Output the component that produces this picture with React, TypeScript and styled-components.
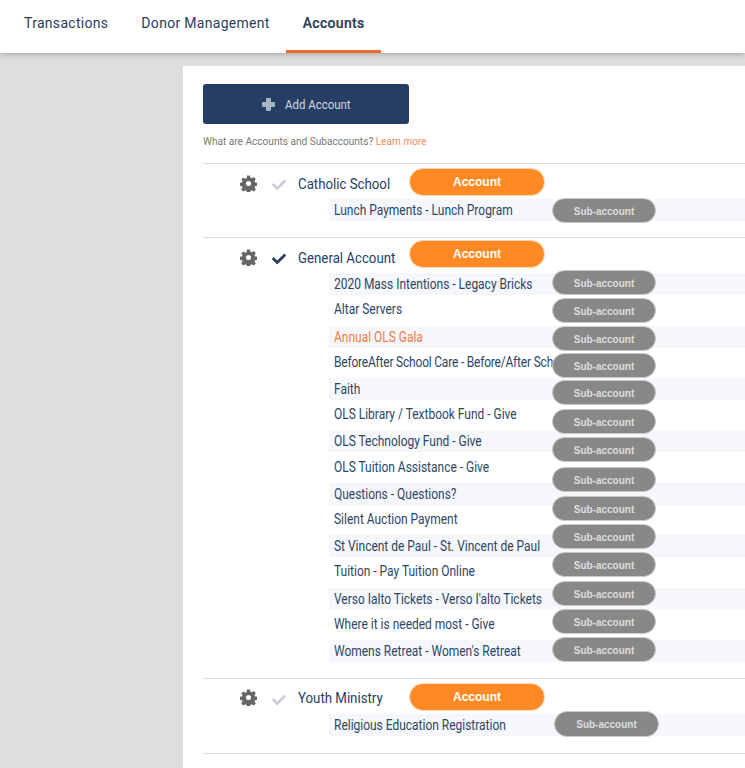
import styled, { createGlobalStyle } from 'styled-components'
import { FaCheck } from 'react-icons/fa'

const Global = createGlobalStyle`
  html, body { margin: 0; padding: 0; background: #dedede; }
  body { font-family: Roboto, "Liberation Sans", sans-serif; }
`

const Page = styled.div`
  width: 745px;
  height: 768px;
  overflow: hidden;
  display: flex;
  flex-direction: column;
`
const TopBar = styled.nav`
  height: 53px;
  flex: none;
  background: #ffffff;
  display: flex;
  padding-left: 7.5px;
  box-shadow: 0 1px 6px rgba(0, 0, 0, 0.28);
`
const Tab = styled.a<{ $active?: boolean }>`
  height: 46px;
  padding: 0 16.5px 4px;
  display: flex;
  align-items: center;
  font-size: 14px;
  letter-spacing: 0.3px;
  color: #27405f;
  font-weight: ${(p) => (p.$active ? 500 : 400)};
  -webkit-text-stroke: ${(p) => (p.$active ? '0.2px' : '0')};
  border-bottom: 3px solid ${(p) => (p.$active ? '#f26a2e' : 'transparent')};
`
const Body = styled.div`
  flex: 1;
  display: flex;
  padding: 13px 0 0 183px;
`
const Panel = styled.main`
  flex: 1;
  background: #ffffff;
  padding: 18px 0 0 20px;
`
// the reference font is a condensed one, none is installed so squeeze Roboto
const Narrow = styled.span`
  display: inline-block;
  white-space: nowrap;
  transform: scaleX(0.855);
  transform-origin: left center;
`
const RowText = styled(Narrow)<{ $tight?: boolean }>`
  vertical-align: top;
  letter-spacing: ${(p) => (p.$tight ? '-0.22px' : 'normal')};
`
const AddButton = styled.button`
  width: 206px;
  height: 40px;
  padding: 0 0 0 59px;
  background: #263e63;
  border: none;
  border-radius: 3px;
  color: #d3d9e2;
  font-family: inherit;
  font-size: 13.4px;
  display: flex;
  align-items: center;
  gap: 10px;
`
const PlusIcon = styled.svg`
  width: 13px;
  height: 13px;
  flex: none;
  fill: #a8b3c3;
`
const Help = styled.p`
  margin: 9px 0 14.3px;
  height: 16px;
  line-height: 16px;
  font-size: 11.8px;
  color: #777777;
`
const Learn = styled.a`
  color: #f58a5a;
`
const Group = styled.section`
  border-top: 1px solid #dddddd;
  padding: 4px 0 16px;
`
const EndRule = styled.hr`
  margin: 1px 0 0;
  border: none;
  border-top: 1px solid #dddddd;
`
const Head = styled.div`
  display: flex;
  align-items: center;
  height: 28px;
  margin-bottom: 3px;
  padding-left: 37px;
`
const GearIcon = styled.svg`
  width: 17px;
  height: 17px;
  color: #666666;
  flex: none;
  margin-top: 2px;
`
const Check = styled(FaCheck)<{ $on?: boolean }>`
  width: 14px;
  height: 14px;
  flex: none;
  margin: 6px 12.5px 0 14.5px;
  color: ${(p) => (p.$on ? '#27405f' : '#c8cfd9')};
`
const AccountName = styled.span`
  width: 111px;
  flex: none;
  font-size: 15.5px;
  color: #27405f;
  margin-top: 3px;
`
const AccountPill = styled.span<{ $raised?: boolean }>`
  width: 136px;
  height: 28px;
  box-sizing: border-box;
  border-radius: 14px;
  background: #ff8a25;
  border: 1px solid #ffd9b5;
  color: #ffffff;
  font: bold 12px "Liberation Sans", sans-serif;
  display: flex;
  align-items: center;
  justify-content: center;
  margin-top: ${(p) => (p.$raised ? -4 : 0)}px;
`
const Rows = styled.div`
  position: relative;
  margin-left: 126px;
  display: flex;
  flex-direction: column;
  gap: 4.2px;
`
const Row = styled.div<{ $striped: boolean; $orange: boolean }>`
  height: 22px;
  line-height: ${(p) => (p.$striped ? 22 : 21.5)}px;
  padding-left: 5px;
  font-size: 14px;
  color: ${(p) => (p.$orange ? '#f27b45' : '#2c4666')};
  background: ${(p) => (p.$striped ? '#f5f7fb' : 'transparent')};
`
// the pills do not follow the rows one to one, they lie over them in their own stack
const PillStack = styled.div<{ $top: number; $left: number }>`
  position: absolute;
  top: ${(p) => p.$top}px;
  left: ${(p) => p.$left}px;
`
const SubPill = styled.div<{ $gap: number; $large?: boolean }>`
  width: ${(p) => (p.$large ? 105 : 104)}px;
  height: ${(p) => (p.$large ? 26 : 25)}px;
  margin-top: ${(p) => p.$gap}px;
  padding-top: 1px;
  box-sizing: border-box;
  border-radius: 13px;
  background: #888888;
  border: 1px solid #c9c9c9;
  color: #dddddd;
  font: bold 10px "Liberation Sans", sans-serif;
  display: flex;
  align-items: center;
  justify-content: center;
`

const Gear = () => (
  <GearIcon viewBox="0 0 17 17" fill="currentColor">
    <path
      fillRule="evenodd"
      d="M7 0.5h3l.4 2.2 1.4.6 1.9-1.3 2.1 2.1-1.3 1.9.6 1.4 2.2.4v3l-2.2.4-.6 1.4 1.3 1.9-2.1 2.1-1.9-1.3-1.4.6-.4 2.2H7l-.4-2.2-1.4-.6-1.9 1.3-2.1-2.1 1.3-1.9-.6-1.4-2.2-.4v-3l2.2-.4.6-1.4L1.2 4.6l2.1-2.1 1.9 1.3 1.4-.6zM8.5 6a2.5 2.5 0 1 0 0 5 2.5 2.5 0 0 0 0-5z"
    />
  </GearIcon>
)

type Account = {
  name: string
  active?: boolean
  rows: { label: string; orange?: boolean; tight?: boolean }[]
  pillGaps: number[]
  pillTop: number
  pillLeft: number
  largePill?: boolean
}

const accounts: Account[] = [
  {
    name: 'Catholic School',
    rows: [{ label: 'Lunch Payments - Lunch Program' }],
    pillGaps: [0],
    pillTop: -1,
    pillLeft: 223,
  },
  {
    name: 'General Account',
    active: true,
    rows: [
      { label: '2020 Mass Intentions - Legacy Bricks' },
      { label: 'Altar Servers' },
      { label: 'Annual OLS Gala', orange: true },
      { label: 'BeforeAfter School Care - Before/After Sch', tight: true },
      { label: 'Faith' },
      { label: 'OLS Library / Textbook Fund - Give' },
      { label: 'OLS Technology Fund - Give' },
      { label: 'OLS Tuition Assistance - Give' },
      { label: 'Questions - Questions?' },
      { label: 'Silent Auction Payment' },
      { label: 'St Vincent de Paul - St. Vincent de Paul' },
      { label: 'Tuition - Pay Tuition Online' },
      { label: "Verso Ialto Tickets - Verso I'alto Tickets" },
      { label: 'Where it is needed most - Give' },
      { label: "Womens Retreat - Women's Retreat" },
    ],
    pillGaps: [0, 3, 3, 2, 2, 4, 3, 5, 4, 3, 3, 4, 3, 3],
    pillTop: -3,
    pillLeft: 223,
  },
  {
    name: 'Youth Ministry',
    rows: [{ label: 'Religious Education Registration' }],
    pillGaps: [0],
    pillTop: -3,
    pillLeft: 225,
    largePill: true,
  },
]

export default function App() {
  return (
    <Page>
      <Global />
      <TopBar>
        <Tab>Transactions</Tab>
        <Tab>Donor Management</Tab>
        <Tab $active>Accounts</Tab>
      </TopBar>
      <Body>
        <Panel>
          <AddButton>
            <PlusIcon viewBox="0 0 13 13">
              <path d="M4 1a1 1 0 0 1 1-1h3a1 1 0 0 1 1 1v3h3a1 1 0 0 1 1 1v3a1 1 0 0 1-1 1H9v3a1 1 0 0 1-1 1H5a1 1 0 0 1-1-1V9H1a1 1 0 0 1-1-1V5a1 1 0 0 1 1-1h3z" />
            </PlusIcon>
            <Narrow>Add Account</Narrow>
          </AddButton>
          <Help>
            <Narrow>
              What are Accounts and Subaccounts? <Learn>Learn more</Learn>
            </Narrow>
          </Help>
          {accounts.map((account) => (
            <Group key={account.name}>
              <Head>
                <Gear />
                <Check $on={account.active} />
                <AccountName>
                  <Narrow>{account.name}</Narrow>
                </AccountName>
                <AccountPill $raised={account.active}>Account</AccountPill>
              </Head>
              <Rows>
                {account.rows.map((row, i) => (
                  <Row key={row.label} $striped={i % 2 === 0} $orange={!!row.orange}>
                    <RowText $tight={row.tight}>{row.label}</RowText>
                  </Row>
                ))}
                <PillStack $top={account.pillTop} $left={account.pillLeft}>
                  {account.pillGaps.map((gap, i) => (
                    <SubPill key={i} $gap={gap} $large={account.largePill}>
                      Sub-account
                    </SubPill>
                  ))}
                </PillStack>
              </Rows>
            </Group>
          ))}
          <EndRule />
        </Panel>
      </Body>
    </Page>
  )
}
